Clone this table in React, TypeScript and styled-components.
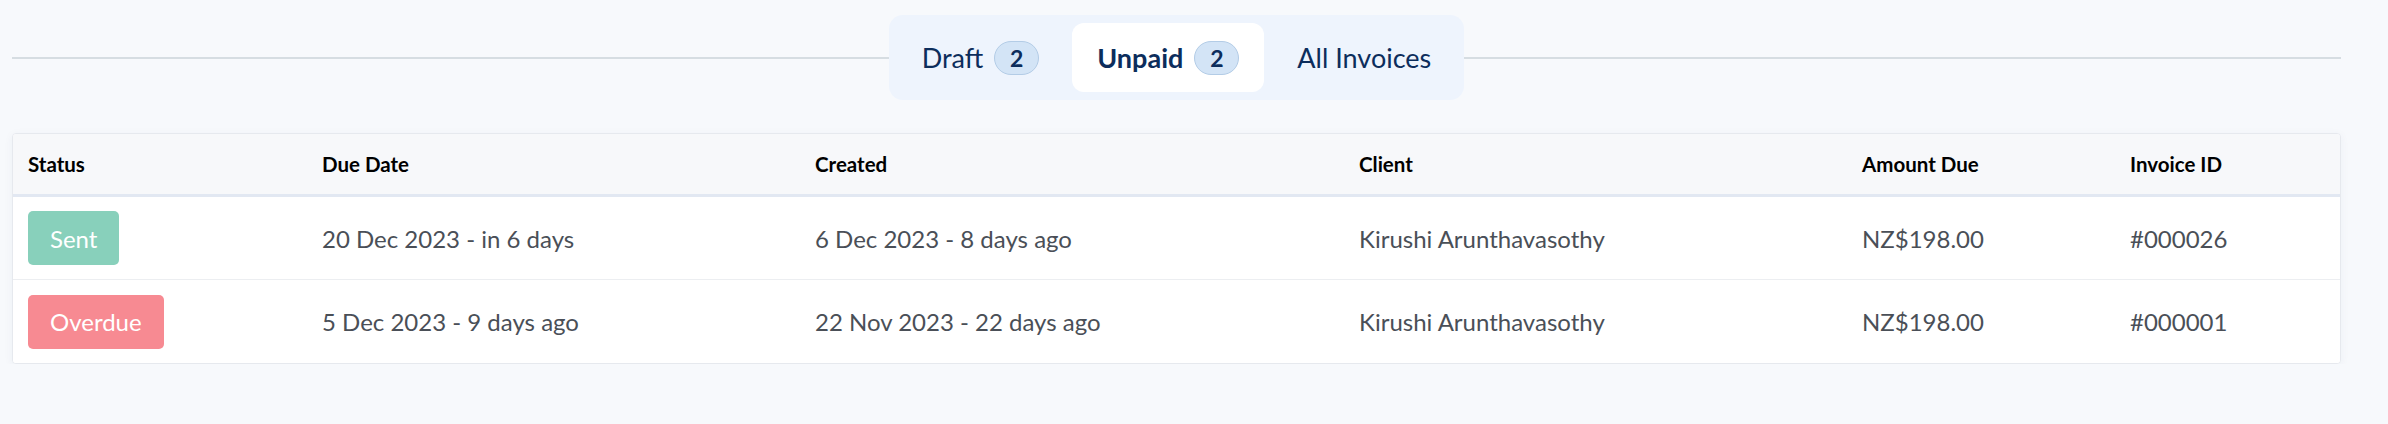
import React from "react";
import styled, { createGlobalStyle } from "styled-components";

const Global = createGlobalStyle`
  html, body { margin: 0; padding: 0; background: #f7f9fc; }
  body { font-family: Lato, "Open Sans", sans-serif; -webkit-font-smoothing: antialiased; }
  * { box-sizing: border-box; }
`;

const Page = styled.div`
  padding: 15px 47px 0 12px;
`;

const TabBar = styled.div`
  display: flex;
  align-items: center;
`;

const Rule = styled.div`
  flex: 1;
  height: 2px;
  background: #d6dde2;
`;

const Tabs = styled.div`
  display: flex;
  gap: 8px;
  padding: 8px;
  background: #eef4fd;
  border-radius: 14px;
`;

const Tab = styled.div<{ $active?: boolean }>`
  display: flex;
  align-items: center;
  gap: 11px;
  height: 69px;
  padding: 0 25px;
  border-radius: 12px;
  background: ${(p) => (p.$active ? "#ffffff" : "transparent")};
  color: #0c2d5c;
  font-size: 27px;
  font-weight: ${(p) => (p.$active ? 700 : 400)};
`;

const Count = styled.span`
  display: inline-flex;
  align-items: center;
  justify-content: center;
  width: 45px;
  height: 34px;
  border-radius: 17px;
  background: #d3e4f6;
  border: 1px solid #b3cce6;
  color: #0c2d5c;
  font-size: 23px;
  font-weight: 700;
`;

const Table = styled.div`
  margin-top: 33px;
  background: #ffffff;
  border: 1px solid #e6e9ee;
  border-radius: 4px;
  box-shadow: 0 2px 10px rgba(30, 50, 90, 0.05);
  overflow: hidden;
`;

const Row = styled.div<{ $head?: boolean }>`
  display: grid;
  grid-template-columns: 294px 493px 544px 503px 268px 1fr;
  align-items: center;
  height: ${(p) => (p.$head ? "63px" : "83px")};
  background: ${(p) => (p.$head ? "#f7f8fa" : "#ffffff")};
  border-bottom: ${(p) => (p.$head ? "3px solid #e2e8f2" : "1px solid #eceef1")};
  &:last-child { border-bottom: none; }
`;

const HeadCell = styled.div`
  padding: 0 16px 0 15px;
  font-size: 20.5px;
  font-weight: 700;
  color: #000000;
`;

const Cell = styled.div`
  padding: 0 16px 0 15px;
  font-size: 24px;
  color: #4a4f57;
`;

const Status = styled.span<{ $tone: "sent" | "overdue" }>`
  display: inline-flex;
  align-items: center;
  height: 54px;
  padding: 0 22px;
  border-radius: 5px;
  color: #ffffff;
  font-size: 24px;
  background: ${(p) => (p.$tone === "sent" ? "#88d0bb" : "#f78a92")};
`;

const rows = [
  { tone: "sent" as const, label: "Sent", due: "20 Dec 2023 - in 6 days", created: "6 Dec 2023 - 8 days ago", client: "Kirushi Arunthavasothy", amount: "NZ$198.00", id: "#000026" },
  { tone: "overdue" as const, label: "Overdue", due: "5 Dec 2023 - 9 days ago", created: "22 Nov 2023 - 22 days ago", client: "Kirushi Arunthavasothy", amount: "NZ$198.00", id: "#000001" },
];

export default function App() {
  return (
    <>
      <Global />
      <Page>
        <TabBar>
          <Rule />
          <Tabs>
            <Tab>Draft <Count>2</Count></Tab>
            <Tab $active>Unpaid <Count>2</Count></Tab>
            <Tab>All Invoices</Tab>
          </Tabs>
          <Rule />
        </TabBar>
        <Table>
          <Row $head>
            <HeadCell>Status</HeadCell>
            <HeadCell>Due Date</HeadCell>
            <HeadCell>Created</HeadCell>
            <HeadCell>Client</HeadCell>
            <HeadCell>Amount Due</HeadCell>
            <HeadCell>Invoice ID</HeadCell>
          </Row>
          {rows.map((r) => (
            <Row key={r.id}>
              <Cell><Status $tone={r.tone}>{r.label}</Status></Cell>
              <Cell>{r.due}</Cell>
              <Cell>{r.created}</Cell>
              <Cell>{r.client}</Cell>
              <Cell>{r.amount}</Cell>
              <Cell>{r.id}</Cell>
            </Row>
          ))}
        </Table>
      </Page>
    </>
  );
}
